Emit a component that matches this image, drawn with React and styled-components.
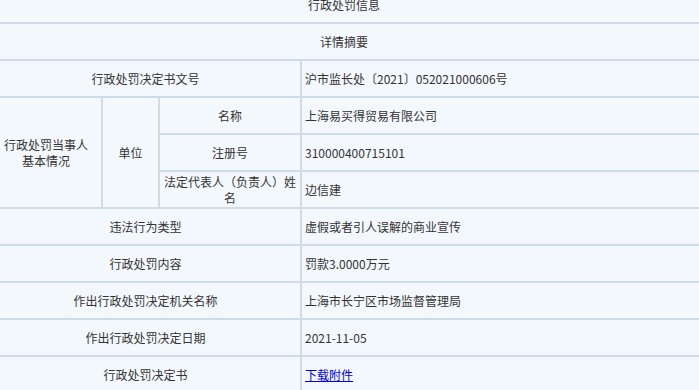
import React from 'react'
import styled, { createGlobalStyle } from 'styled-components'

const GlobalStyle = createGlobalStyle`
  html, body {
    margin: 0;
    padding: 0;
    background: #f3f8fd;
    overflow: hidden;
  }
  body {
    font-family: "Microsoft YaHei", "Noto Sans CJK SC", sans-serif;
    font-size: 12px;
    color: #333;
  }
`

const Sheet = styled.div`
  display: grid;
  grid-template-columns: 110px 55px 140px 400px;
  grid-auto-rows: 35px;
  gap: 2px;
  width: 711px;
  margin: -13px 0 0 -9px;
  background: #cfdbe6;
`

const Cell = styled.div`
  background: #f3f8fd;
  display: flex;
  align-items: center;
  justify-content: ${p => (p.$value ? 'flex-start' : 'center')};
  text-align: ${p => (p.$value ? 'left' : 'center')};
  padding: ${p => (p.$value ? '0 0 0 3px' : '0 2px')};
  line-height: 16px;
  grid-column: ${p => p.$span ? `span ${p.$span}` : 'auto'};
  grid-row: ${p => p.$rows ? `span ${p.$rows}` : 'auto'};
`

const Heading = styled(Cell)`
  grid-column: 1 / -1;
  padding-right: 7px;
`

const Link = styled.a`
  color: #0000ee;
  text-decoration: underline;
`

const rows = [
  ['违法行为类型', '虚假或者引人误解的商业宣传'],
  ['行政处罚内容', '罚款3.0000万元'],
  ['作出行政处罚决定机关名称', '上海市长宁区市场监督管理局'],
  ['作出行政处罚决定日期', '2021-11-05'],
]

export default function App() {
  return (
    <>
      <GlobalStyle />
      <Sheet>
        <Heading>行政处罚信息</Heading>
        <Heading>详情摘要</Heading>

        <Cell $span={3}>行政处罚决定书文号</Cell>
        <Cell $value>沪市监长处〔2021〕052021000606号</Cell>

        <Cell $rows={3}>行政处罚当事人<br />基本情况</Cell>
        <Cell $rows={3}>单位</Cell>
        <Cell>名称</Cell>
        <Cell $value>上海易买得贸易有限公司</Cell>
        <Cell>注册号</Cell>
        <Cell $value>310000400715101</Cell>
        <Cell>法定代表人（负责人）姓名</Cell>
        <Cell $value>边信建</Cell>

        {rows.map(([label, value]) => (
          <React.Fragment key={label}>
            <Cell $span={3}>{label}</Cell>
            <Cell $value>{value}</Cell>
          </React.Fragment>
        ))}

        <Cell $span={3}>行政处罚决定书</Cell>
        <Cell $value><Link href="#">下载附件</Link></Cell>
      </Sheet>
    </>
  )
}
